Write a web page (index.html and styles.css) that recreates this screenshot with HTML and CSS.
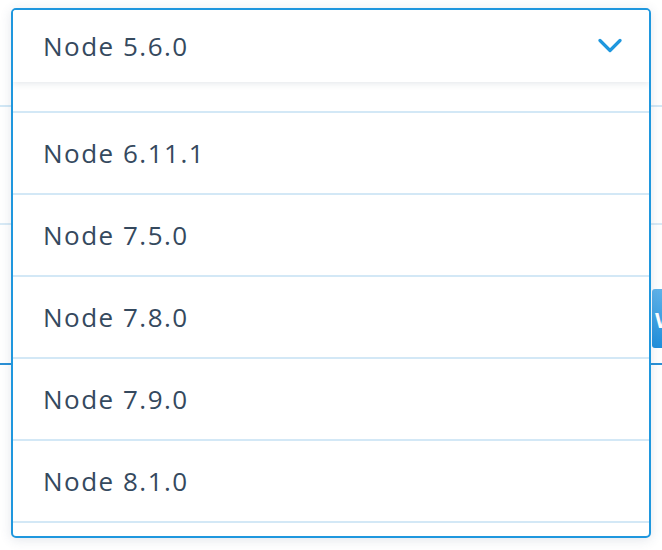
FILE: index.html
```html
<!DOCTYPE html>
<html>
<head>
<meta charset="utf-8">
<link rel="stylesheet" href="styles.css">
</head>
<body>
<div class="page">
  <div class="bg-row bg-row-1"></div>
  <div class="bg-row bg-row-2"></div>
  <div class="bg-row bg-row-3">
    <div class="bg-spacer"></div>
    <button class="bg-button">W</button>
  </div>
  <div class="bg-row bg-row-4"></div>
</div>

<div class="dropdown">
  <div class="dropdown-head">
    <span class="dropdown-value">Node 5.6.0</span>
    <svg class="chevron" width="24" height="16" viewBox="0 0 24 16">
      <path d="M2 2.5 L12 12.5 L22 2.5" fill="none" stroke="#1f97de" stroke-width="3.2" stroke-linecap="round" stroke-linejoin="round"/>
    </svg>
  </div>
  <ul class="dropdown-list">
    <li class="dropdown-item dropdown-item-partial"></li>
    <li class="dropdown-item">Node 6.11.1</li>
    <li class="dropdown-item">Node 7.5.0</li>
    <li class="dropdown-item">Node 7.8.0</li>
    <li class="dropdown-item">Node 7.9.0</li>
    <li class="dropdown-item">Node 8.1.0</li>
    <li class="dropdown-item"></li>
  </ul>
</div>
</body>
</html>
```

FILE: styles.css
```css
html, body {
  margin: 0;
  padding: 0;
  background: #ffffff;
}

body {
  width: 662px;
  height: 550px;
  overflow: hidden;
  position: relative;
  font-family: "Open Sans", "Lato", sans-serif;
}

.page {
  display: flex;
  flex-direction: column;
}

.bg-row {
  box-sizing: border-box;
}

.bg-row-1 {
  height: 107px;
  border-bottom: 2px solid #d2e8f6;
}

.bg-row-2 {
  height: 118px;
  border-bottom: 2px solid #d8eaf6;
}

.bg-row-3 {
  height: 123px;
  padding-top: 64px;
  display: flex;
  justify-content: flex-end;
}

.bg-spacer {
  flex: 1;
}

.bg-button {
  width: 90px;
  height: 59px;
  margin: 0 -80px 0 0;
  border: none;
  border-radius: 3px;
  background: linear-gradient(#5fb3ea, #1f8fdc);
  color: #ffffff;
  font-family: "Open Sans", sans-serif;
  font-weight: 700;
  font-size: 22px;
  text-align: left;
  padding: 0 0 0 3px;
}

.bg-row-4 {
  height: 17px;
  border-bottom: 2px solid #2a90d6;
}

.dropdown {
  position: absolute;
  top: 8px;
  left: 11px;
  width: 640px;
  height: 530px;
  box-sizing: border-box;
  border: 2px solid #1f97de;
  border-radius: 5px;
  background: #ffffff;
  box-shadow: 0 2px 12px rgba(60, 80, 110, 0.14);
  display: flex;
  flex-direction: column;
  overflow: hidden;
}

.dropdown-head {
  height: 72px;
  flex: none;
  display: flex;
  align-items: center;
  justify-content: space-between;
  padding: 0 27px 0 30px;
  position: relative;
  z-index: 1;
  background: #ffffff;
  box-shadow: 0 2px 6px rgba(60, 80, 110, 0.12);
}

.dropdown-value {
  font-size: 26px;
  color: #35495e;
  letter-spacing: 1.5px;
}

.chevron {
  display: block;
}

.dropdown-list {
  list-style: none;
  margin: 0;
  padding: 0;
  flex: 1;
  overflow: hidden;
}

.dropdown-item {
  height: 80px;
  border-bottom: 2px solid #d3e8f6;
  display: flex;
  align-items: center;
  padding-left: 30px;
  font-size: 26px;
  color: #35495e;
  letter-spacing: 1.5px;
}

.dropdown-item-partial {
  margin-top: -51px;
}
```
